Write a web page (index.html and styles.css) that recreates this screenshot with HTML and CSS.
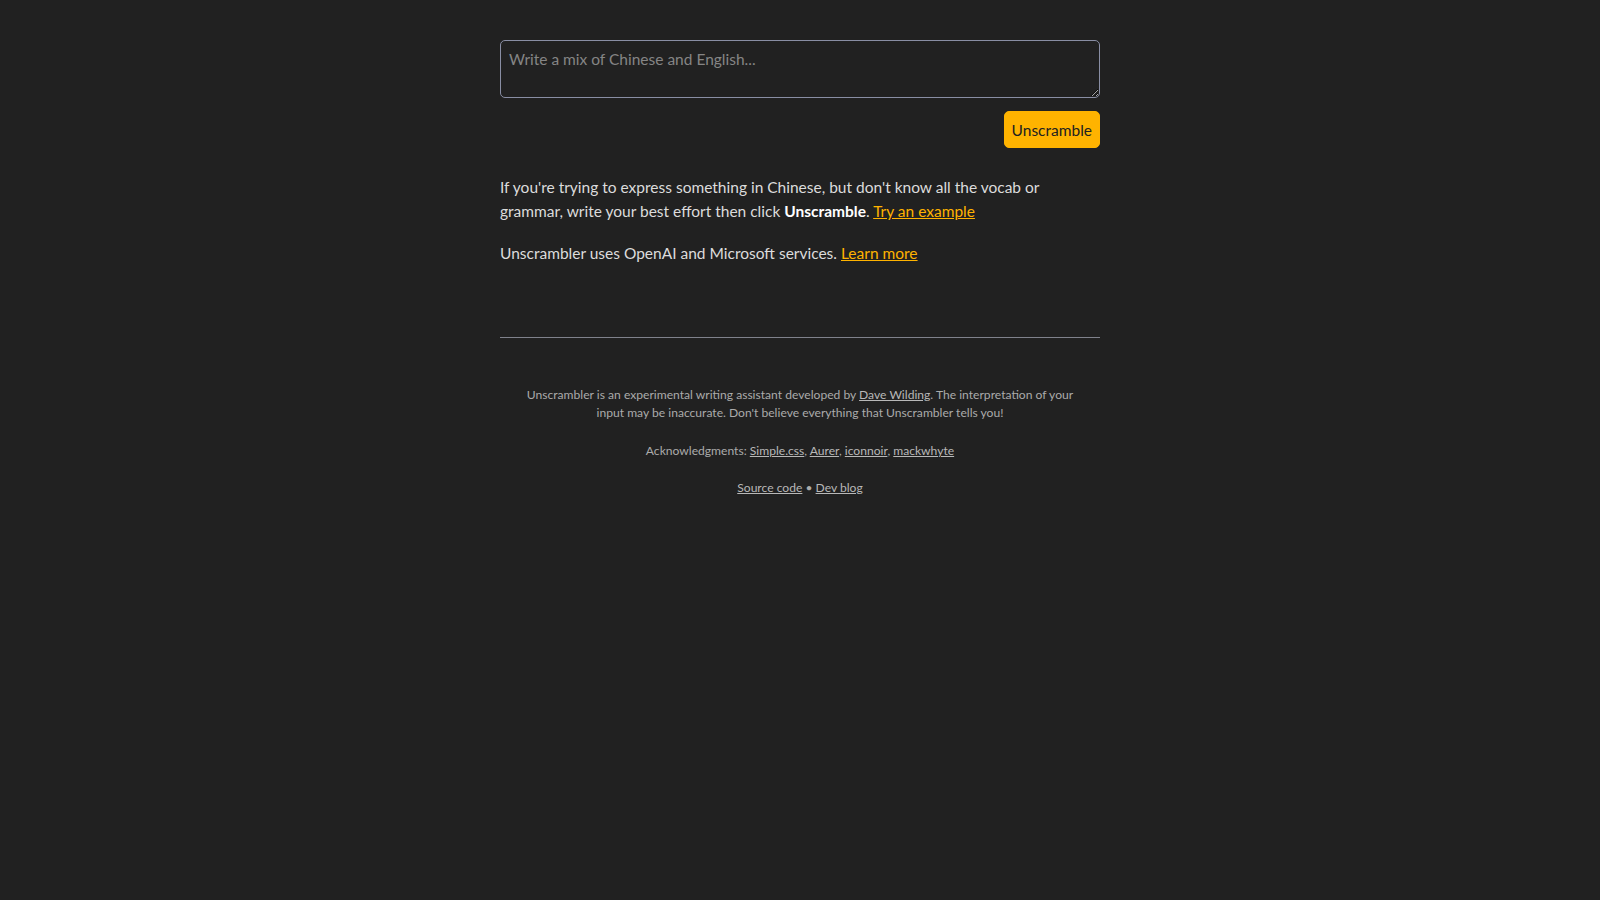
FILE: index.html
```html
<!DOCTYPE html>
<html lang="en">
<head>
<meta charset="utf-8">
<title>Unscrambler</title>
<link rel="stylesheet" href="styles.css">
</head>
<body>
<main class="page">
  <form class="composer">
    <textarea class="composer-input" rows="2" placeholder="Write a mix of Chinese and English..."></textarea>
    <div class="composer-actions">
      <button type="button" class="btn-primary">Unscramble</button>
    </div>
  </form>
  <section class="intro">
    <p>If you're trying to express something in Chinese, but don't know all the vocab or grammar, write your best effort then click <strong>Unscramble</strong>. <a href="#">Try an example</a></p>
    <p>Unscrambler uses OpenAI and Microsoft services. <a href="#">Learn more</a></p>
  </section>
  <footer class="site-footer">
    <p>Unscrambler is an experimental writing assistant developed by <a href="#">Dave Wilding</a>. The interpretation of your input may be inaccurate. Don't believe everything that Unscrambler tells you!</p>
    <p>Acknowledgments: <a href="#">Simple.css</a>, <a href="#">Aurer</a>, <a href="#">iconnoir</a>, <a href="#">mackwhyte</a></p>
    <p><a href="#">Source code</a> • <a href="#">Dev blog</a></p>
  </footer>
</main>
</body>
</html>
```

FILE: styles.css
```css
html, body {
  margin: 0;
  padding: 0;
  background: #212121;
}

body {
  color: #dcdcdc;
  font-family: Lato, "Open Sans", "Liberation Sans", sans-serif;
  font-size: 15.5px;
  line-height: 23.5px;
}

.page {
  width: 600px;
  margin: 0 auto;
  padding-top: 40px;
}

.composer {
  margin: 0;
}

.composer-input {
  display: block;
  box-sizing: border-box;
  width: 100%;
  height: 58px;
  margin: 0;
  padding: 8px;
  background: #212121;
  color: #dcdcdc;
  border: 1px solid #898ea4;
  border-radius: 5px;
  font-family: inherit;
  font-size: 15.5px;
  line-height: 20px;
  resize: vertical;
}

.composer-input::placeholder {
  color: #858585;
}

.composer-actions {
  display: flex;
  justify-content: flex-end;
  margin-top: 13px;
}

.btn-primary {
  box-sizing: border-box;
  height: 37px;
  padding: 0 7px;
  background: #ffb300;
  color: #212121;
  border: 1px solid #ffb300;
  border-radius: 5px;
  font-family: inherit;
  font-size: 15.5px;
  cursor: pointer;
}

.intro {
  margin-top: 28px;
}

.intro p {
  margin: 0 0 19px;
}

.intro strong {
  color: #ffffff;
  font-weight: 700;
}

.intro a {
  color: #ffb300;
  text-decoration: underline;
}

.site-footer {
  margin-top: 71px;
  border-top: 1px solid #80828c;
  padding: 48px 16px 24px;
  text-align: center;
  color: #ababab;
  font-size: 12.1px;
  line-height: 18.5px;
}

.site-footer p {
  margin: 0 0 19px;
}

.site-footer a {
  color: #b8b8b8;
  text-decoration: underline;
}
```
